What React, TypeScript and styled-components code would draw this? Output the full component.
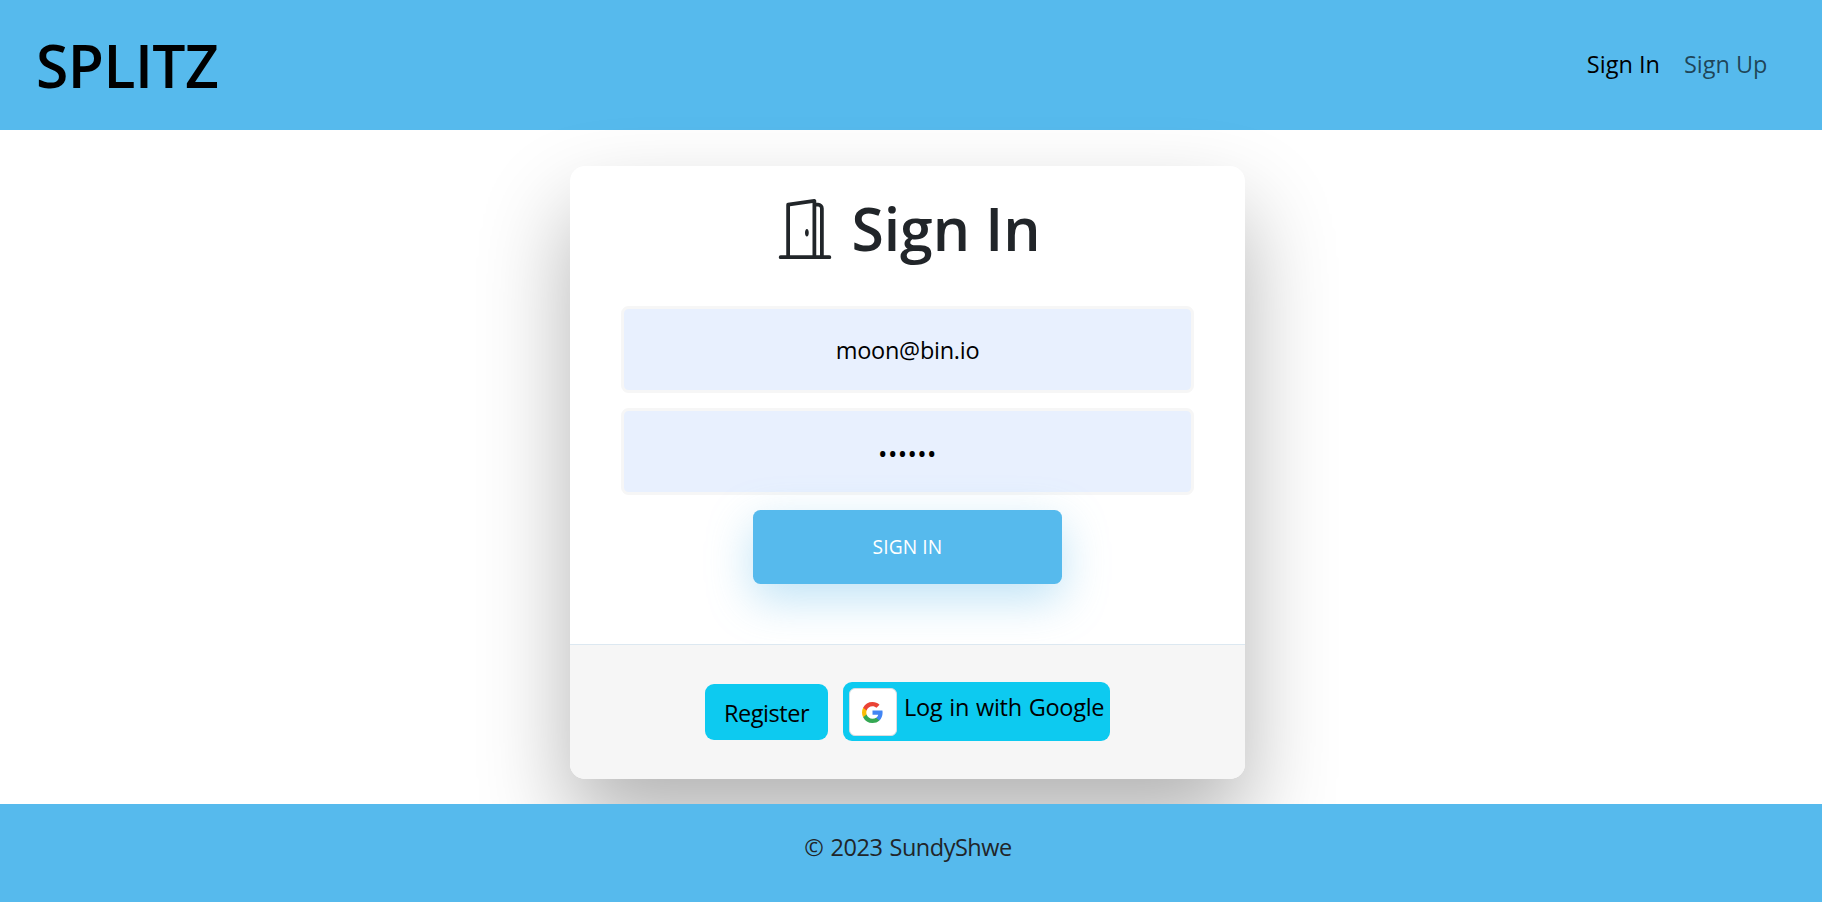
import React from "react";
import styled, { createGlobalStyle } from "styled-components";

const sky = "#56baed";
const ink = "#212529";

const GlobalStyle = createGlobalStyle`
  *, *::before, *::after { box-sizing: border-box; }
  body {
    margin: 0;
    background: #fff;
    color: ${ink};
    font-family: "Segoe UI", "Open Sans", "Noto Sans", sans-serif;
    font-size: 23.5px;
    line-height: 36px;
  }
`;

const Page = styled.div`
  display: flex;
  flex-direction: column;
  height: 902px;
  overflow: hidden;
`;

const Navbar = styled.header`
  display: flex;
  align-items: center;
  justify-content: space-between;
  height: 130px;
  flex: none;
  padding: 0 54.5px 0 36px;
  background: ${sky};
`;

const Brand = styled.a`
  color: #000;
  font-size: 58.8px;
  font-weight: 600;
  line-height: 72px;
  letter-spacing: -0.5px;
`;

const Nav = styled.nav`
  display: flex;
  gap: 24px;
  padding-bottom: 2px;
`;

const NavLink = styled.a<{ $active?: boolean }>`
  color: ${(p) => (p.$active ? "#000" : "rgba(0, 0, 0, 0.65)")};
`;

const Main = styled.main`
  display: flex;
  justify-content: center;
  align-items: flex-start;
  flex: 1;
  padding: 36px 7px 25px 0;
`;

const Card = styled.section`
  display: flex;
  flex-direction: column;
  width: 675px;
  height: 613px;
  border-radius: 15px;
  background: #fff;
  box-shadow: 0 45px 90px 0 rgba(0, 0, 0, 0.3);
`;

const Title = styled.h1`
  display: flex;
  justify-content: center;
  align-items: center;
  gap: 16px;
  margin: 26px 0 42px;
  padding-left: 1px;
  font-size: 58.8px;
  font-weight: 600;
  line-height: 72px;
`;

const DoorIcon = styled.svg`
  width: 60px;
  height: 60px;
  margin-top: 2px;
  fill: currentColor;
`;

const Form = styled.form`
  display: flex;
  flex-direction: column;
  align-items: center;
  gap: 15px;
  flex: 1;
`;

const Field = styled.input`
  width: 573.75px;
  height: 87px;
  padding: 0 45px;
  border: 3px solid #f6f6f6;
  border-radius: 7.5px;
  outline: none;
  background: #e8f0fe;
  color: #000;
  font: inherit;
  letter-spacing: -0.25px;
  text-align: center;

  &[type="password"] {
    padding-top: 2px;
    font-size: 25px;
    letter-spacing: 0.4px;
  }
`;

const Submit = styled.button`
  width: 309px;
  height: 74px;
  padding: 0 0 2px;
  border: none;
  border-radius: 7.5px;
  background: ${sky};
  box-shadow: 0 15px 45px 0 rgba(95, 186, 233, 0.4);
  color: #fff;
  font-family: inherit;
  font-size: 19.2px;
  letter-spacing: 0.1px;
  text-transform: uppercase;
`;

const CardFooter = styled.div`
  display: flex;
  justify-content: center;
  align-items: center;
  gap: 15px;
  height: 135px;
  border-top: 1px solid #dce8f1;
  border-radius: 0 0 15px 15px;
  background: #f6f6f6;
`;

const InfoButton = styled.button`
  display: flex;
  justify-content: center;
  align-items: center;
  border: none;
  border-radius: 9px;
  background: #0dcaf0;
  color: #000;
  font: inherit;
`;

const RegisterButton = styled(InfoButton)`
  width: 123px;
  height: 56px;
  padding: 2px 0 0;
  letter-spacing: -0.45px;
`;

const GoogleButton = styled(InfoButton)`
  align-items: flex-start;
  justify-content: flex-start;
  gap: 7px;
  width: 267px;
  height: 59px;
  margin-bottom: 1px;
  padding: 6px;
  line-height: 38px;
  letter-spacing: -0.3px;
  word-spacing: 1.2px;
  white-space: nowrap;
`;

const GoogleBadge = styled.span`
  display: flex;
  justify-content: center;
  align-items: center;
  flex: none;
  width: 48px;
  height: 48px;
  border: 1px solid #dadce0;
  border-radius: 6px;
  background: #fff;
`;

const GoogleLogo = styled.svg`
  width: 21px;
  height: 21px;
  margin-right: 1px;
`;

const Footer = styled.footer`
  position: relative;
  flex: none;
  height: 98px;
  padding: 25px 6px 0 0;
  background: ${sky};
  letter-spacing: -0.5px;
  word-spacing: 1.6px;
  text-align: center;
`;

export default function App() {
  return (
    <>
      <GlobalStyle />
      <Page>
        <Navbar>
          <Brand>SPLITZ</Brand>
          <Nav>
            <NavLink $active>Sign In</NavLink>
            <NavLink>Sign Up</NavLink>
          </Nav>
        </Navbar>
        <Main>
          <Card>
            <Title>
              <DoorIcon viewBox="0 0 16 16" aria-hidden="true">
                <path d="M8.5 10c-.276 0-.5-.448-.5-1s.224-1 .5-1 .5.448.5 1-.224 1-.5 1z" />
                <path d="M10.828.122A.5.5 0 0 1 11 .5V1h.5A1.5 1.5 0 0 1 13 2.5V15h1.5a.5.5 0 0 1 0 1h-13a.5.5 0 0 1 0-1H3V1.5a.5.5 0 0 1 .43-.495l7-1a.5.5 0 0 1 .398.117zM11.5 2H11v13h1V2.5a.5.5 0 0 0-.5-.5zM4 1.934V15h6V1.077l-6 .857z" />
              </DoorIcon>
              <span>Sign In</span>
            </Title>
            <Form onSubmit={(e) => e.preventDefault()}>
              <Field type="text" name="email" defaultValue="moon@bin.io" />
              <Field type="password" name="password" defaultValue="secret" />
              <Submit type="submit">Sign In</Submit>
            </Form>
            <CardFooter>
              <RegisterButton>Register</RegisterButton>
              <GoogleButton>
                <GoogleBadge>
                  <GoogleLogo viewBox="0 0 18 18" aria-hidden="true">
                    <path fill="#4285F4" d="M17.64 9.2c0-.637-.057-1.251-.164-1.84H9v3.481h4.844c-.209 1.125-.843 2.078-1.796 2.717v2.258h2.908c1.702-1.567 2.684-3.874 2.684-6.615z" />
                    <path fill="#34A853" d="M9 18c2.43 0 4.467-.806 5.956-2.18l-2.908-2.259c-.806.54-1.837.86-3.048.86-2.344 0-4.328-1.584-5.036-3.711H.957v2.332A8.997 8.997 0 0 0 9 18z" />
                    <path fill="#FBBC05" d="M3.964 10.71A5.41 5.41 0 0 1 3.682 9c0-.593.102-1.17.282-1.71V4.958H.957A8.996 8.996 0 0 0 0 9c0 1.452.348 2.827.957 4.042l3.007-2.332z" />
                    <path fill="#EA4335" d="M9 3.58c1.321 0 2.508.454 3.44 1.345l2.582-2.58C13.463.891 11.426 0 9 0A8.997 8.997 0 0 0 .957 4.958L3.964 7.29C4.672 5.163 6.656 3.58 9 3.58z" />
                  </GoogleLogo>
                </GoogleBadge>
                Log in with Google
              </GoogleButton>
            </CardFooter>
          </Card>
        </Main>
        <Footer>© 2023 SundyShwe</Footer>
      </Page>
    </>
  );
}
